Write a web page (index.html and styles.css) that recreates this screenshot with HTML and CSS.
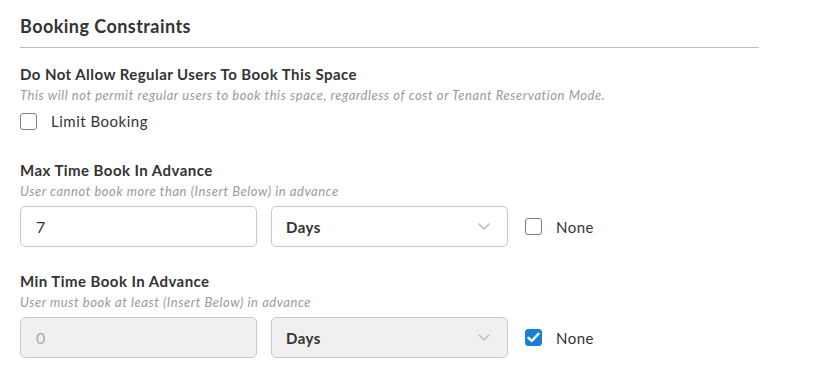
FILE: index.html
```html
<!DOCTYPE html>
<html lang="en">

<head>
    <meta charset="UTF-8">
    <meta name="viewport" content="width=device-width, initial-scale=1.0">
    <title>Booking Constraints</title>
    <link rel="stylesheet" href="styles.css">
</head>

<body>
    <div class="section">
        <h2>Booking Constraints</h2>

        <!-- Limit booking -->
        <div class="group first">
            <div class="label">Do Not Allow Regular Users To Book This Space</div>
            <div class="hint">This will not permit regular users to book this space, regardless of cost or Tenant Reservation Mode.</div>
            <label class="check limit">
                <span class="box"></span>
                <span class="check-text">Limit Booking</span>
            </label>
        </div>

        <!-- Max time -->
        <div class="group second">
            <div class="label">Max Time Book In Advance</div>
            <div class="hint">User cannot book more than (Insert Below) in advance</div>
            <div class="field-row">
                <input class="text-input" type="text" value="7">
                <div class="select-wrap">
                    <select class="select">
                        <option>Days</option>
                        <option>Weeks</option>
                        <option>Months</option>
                    </select>
                    <svg class="chevron" width="12" height="7" viewBox="0 0 12 7">
                        <path d="M1 1 L6 6 L11 1" fill="none" stroke="#bdbdbd" stroke-width="1.5" stroke-linecap="round" stroke-linejoin="round"/>
                    </svg>
                </div>
                <label class="check">
                    <span class="box"></span>
                    <span class="check-text">None</span>
                </label>
            </div>
        </div>

        <!-- Min time -->
        <div class="group">
            <div class="label">Min Time Book In Advance</div>
            <div class="hint">User must book at least (Insert Below) in advance</div>
            <div class="field-row">
                <input class="text-input" type="text" value="0" disabled>
                <div class="select-wrap">
                    <select class="select" disabled>
                        <option>Days</option>
                        <option>Weeks</option>
                        <option>Months</option>
                    </select>
                    <svg class="chevron" width="12" height="7" viewBox="0 0 12 7">
                        <path d="M1 1 L6 6 L11 1" fill="none" stroke="#bdbdbd" stroke-width="1.5" stroke-linecap="round" stroke-linejoin="round"/>
                    </svg>
                </div>
                <label class="check">
                    <span class="box checked">
                        <svg width="13" height="11" viewBox="0 0 13 11">
                            <path d="M1.5 5.8 L4.8 9 L11.5 1.8" fill="none" stroke="#ffffff" stroke-width="2.4" stroke-linecap="round" stroke-linejoin="round"/>
                        </svg>
                    </span>
                    <span class="check-text">None</span>
                </label>
            </div>
        </div>
    </div>
</body>

</html>
```

FILE: styles.css
```css
* {
    margin: 0;
    padding: 0;
    box-sizing: border-box;
}

body {
    font-family: 'Lato', 'Open Sans', sans-serif;
    background-color: #ffffff;
    color: #333333;
    padding: 14px 20px 0 20px;
}

.section {
    width: 739px;
}

h2 {
    font-size: 18px;
    line-height: 24px;
    font-weight: 700;
    letter-spacing: 0.45px;
    color: #333333;
    padding-bottom: 9px;
    border-bottom: 1px solid #bdbdbd;
}

.group {
    margin-top: 24px;
}

.group.first {
    margin-top: 16px;
}

.group.second {
    margin-top: 30px;
}

.label {
    font-size: 15px;
    line-height: 20px;
    font-weight: 700;
    letter-spacing: 0.45px;
    color: #333333;
}

.hint {
    font-size: 13px;
    line-height: 16px;
    font-style: italic;
    letter-spacing: 0.55px;
    color: #9a9a9a;
    margin-top: 3px;
}

.check {
    display: flex;
    align-items: center;
    gap: 14px;
    font-size: 15px;
    line-height: 18px;
    letter-spacing: 0.5px;
    color: #333333;
    cursor: pointer;
}

.check.limit {
    margin-top: 9px;
}

.box {
    width: 17px;
    height: 17px;
    border: 1px solid #808080;
    border-radius: 3px;
    background-color: #ffffff;
    display: flex;
    align-items: center;
    justify-content: center;
}

.box.checked {
    background-color: #1a7fd6;
    border-color: #1a7fd6;
}

.field-row {
    display: flex;
    align-items: center;
    margin-top: 7px;
}

.text-input {
    width: 237px;
    height: 41px;
    border: 1px solid #c8c8c8;
    border-radius: 5px;
    padding: 0 15px;
    font-family: inherit;
    font-size: 16px;
    color: #333333;
    background-color: #ffffff;
    outline: none;
}

.text-input:disabled {
    background-color: #f0f0f0;
    color: #ababab;
}

.select-wrap {
    position: relative;
    margin-left: 14px;
    margin-right: 17px;
}

.select {
    appearance: none;
    -webkit-appearance: none;
    width: 237px;
    height: 41px;
    border: 1px solid #c8c8c8;
    border-radius: 5px;
    padding: 0 14px;
    font-family: inherit;
    font-size: 15px;
    font-weight: 700;
    letter-spacing: 0.5px;
    color: #333333;
    background-color: #ffffff;
    outline: none;
}

.select:disabled {
    background-color: #f0f0f0;
    color: #333333;
    opacity: 1;
}

.chevron {
    position: absolute;
    right: 18px;
    top: 17px;
    pointer-events: none;
}
```
